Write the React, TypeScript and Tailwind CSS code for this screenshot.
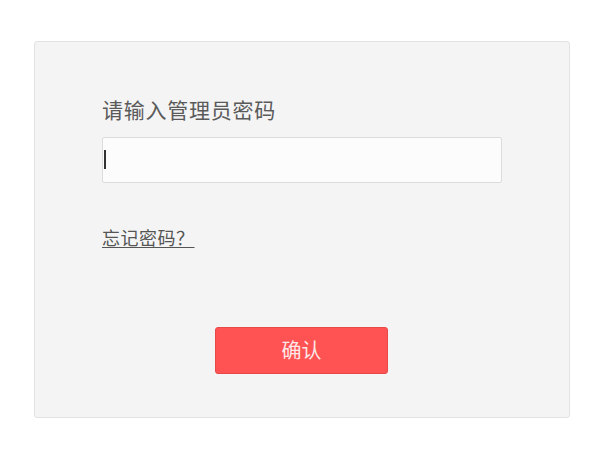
import { useState } from "react"

const font = { fontFamily: '"Liberation Sans", "Noto Sans CJK SC", sans-serif' }

export default function App() {
  const [pwd, setPwd] = useState("")

  return (
    <div className="h-[457px] w-[600px] bg-white pt-[41px] pl-[34px]" style={font}>
      <div className="flex h-[377px] w-[536px] flex-col rounded-[3px] border border-[#e2e2e2] bg-[#f4f4f4] pl-[67px]">
        <label className="mt-[56px] text-[21px] leading-[26px] tracking-[0.75px] text-[#5a5a5a]">
          请输入管理员密码
        </label>
        <div className="relative mt-[13px] h-[46px] w-[400px]">
          <input
            type="password"
            value={pwd}
            onChange={e => setPwd(e.target.value)}
            className="h-full w-full rounded-[2px] border border-[#dcdcdc] bg-[#fcfcfc] px-2 outline-none"
          />
          <span className="absolute left-[2px] top-[13px] h-[19px] w-[2px] bg-[#333]" />
        </div>
        <a
          href="#"
          className="mt-[45px] w-fit pr-[4px] text-[18px] leading-[22px] tracking-[0.5px] text-[#555] underline underline-offset-2"
        >
          忘记密码？
        </a>
        <button className="mt-[77px] ml-[113px] h-[47px] w-[173px] rounded-[3px] border border-[#e84848] bg-[#ff5353] text-[20px] text-[#fde8e8]">
          确认
        </button>
      </div>
    </div>
  )
}
